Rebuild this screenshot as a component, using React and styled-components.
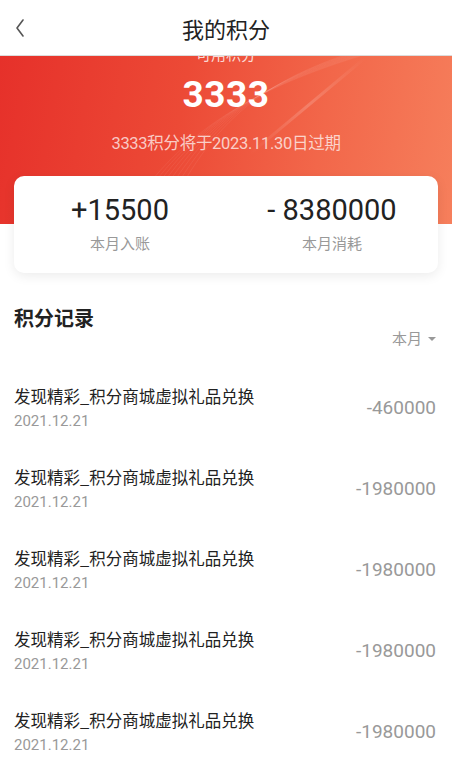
import React from 'react'
import styled, { createGlobalStyle } from 'styled-components'

const GlobalStyle = createGlobalStyle`
  html, body {
    margin: 0;
    padding: 0;
    background: #fff;
  }
  body {
    font-family: Roboto, "Noto Sans CJK SC", sans-serif;
    -webkit-font-smoothing: antialiased;
  }
`

const Page = styled.div`
  width: 452px;
  min-height: 782px;
  background: #fff;
  overflow: hidden;
`

const Header = styled.div`
  position: relative;
  z-index: 2;
  height: 55px;
  background: #fff;
  border-bottom: 1px solid #dcdcdc;
  display: flex;
  align-items: center;
  justify-content: center;
`

const BackButton = styled.div`
  position: absolute;
  left: 10px;
  top: 16px;
  width: 20px;
  height: 24px;
  display: flex;
  align-items: center;
  justify-content: center;
`

const Title = styled.h1`
  margin: 0;
  font-size: 22px;
  font-weight: 400;
  color: #222;
  font-family: "Noto Sans CJK SC", sans-serif;
`

const Hero = styled.div`
  position: relative;
  margin-top: -20px;
  padding: 8px 0 69px;
  background: linear-gradient(100deg, #e6302a 0%, #ec4a36 40%, #f2674a 70%, #f67f5c 100%);
  display: flex;
  flex-direction: column;
  align-items: center;
  overflow: hidden;
`

const HeroDeco = styled.svg`
  position: absolute;
  inset: 0;
  pointer-events: none;
`

const HeroLabel = styled.div`
  position: relative;
  font-size: 15px;
  line-height: 20px;
  color: rgba(255, 255, 255, 0.8);
  font-family: "Noto Sans CJK SC", sans-serif;
`

const Balance = styled.div`
  position: relative;
  margin-top: 9px;
  font-size: 37px;
  line-height: 44px;
  font-weight: 700;
  color: #fff;
  letter-spacing: 0.5px;
`

const Expire = styled.div`
  position: relative;
  margin-top: 16px;
  font-size: 16.5px;
  line-height: 22px;
  color: rgba(255, 255, 255, 0.72);
  letter-spacing: -0.3px;
`

const SummaryCard = styled.div`
  position: relative;
  z-index: 1;
  margin: -48px 14px 0;
  height: 97px;
  box-sizing: border-box;
  padding-top: 16px;
  background: #fff;
  border-radius: 10px;
  box-shadow: 0 3px 12px rgba(0, 0, 0, 0.08);
  display: grid;
  grid-template-columns: 1fr 1fr;
`

const Stat = styled.div`
  display: flex;
  flex-direction: column;
  align-items: center;
`

const StatValue = styled.div`
  font-size: 29px;
  line-height: 36px;
  color: #222;
`

const StatLabel = styled.div`
  margin-top: 5px;
  font-size: 15px;
  line-height: 20px;
  color: #999;
  font-family: "Noto Sans CJK SC", sans-serif;
`

const Section = styled.div`
  padding: 31px 16px 0 14px;
`

const SectionTitle = styled.h2`
  margin: 0;
  font-size: 20px;
  line-height: 28px;
  font-weight: 700;
  color: #222;
  font-family: "Noto Sans CJK SC", sans-serif;
`

const Filter = styled.div`
  margin-top: -4px;
  display: flex;
  justify-content: flex-end;
  align-items: center;
  gap: 6px;
  font-size: 15px;
  line-height: 20px;
  color: #999;
  font-family: "Noto Sans CJK SC", sans-serif;
`

const Caret = styled.span`
  width: 0;
  height: 0;
  margin-top: 2px;
  border-left: 4px solid transparent;
  border-right: 4px solid transparent;
  border-top: 4px solid #999;
`

const List = styled.div`
  margin-top: 18px;
`

const Row = styled.div`
  display: flex;
  align-items: center;
  justify-content: space-between;
  padding: 19px 0 16px;
`

const RowMain = styled.div`
  display: flex;
  flex-direction: column;
  gap: 4px;
`

const RowTitle = styled.div`
  font-size: 16.5px;
  line-height: 22px;
  color: #222;
  font-family: "Noto Sans CJK SC", sans-serif;
`

const RowDate = styled.div`
  font-size: 15px;
  line-height: 20px;
  color: #999;
`

const RowAmount = styled.div`
  font-size: 19px;
  line-height: 24px;
  color: #999;
`

const records = [
  { title: '发现精彩_积分商城虚拟礼品兑换', date: '2021.12.21', amount: '-460000' },
  { title: '发现精彩_积分商城虚拟礼品兑换', date: '2021.12.21', amount: '-1980000' },
  { title: '发现精彩_积分商城虚拟礼品兑换', date: '2021.12.21', amount: '-1980000' },
  { title: '发现精彩_积分商城虚拟礼品兑换', date: '2021.12.21', amount: '-1980000' },
  { title: '发现精彩_积分商城虚拟礼品兑换', date: '2021.12.21', amount: '-1980000' },
]

const App = () => {
  return (
    <Page>
      <GlobalStyle />
      <Header>
        <BackButton>
          <svg width="12" height="20" viewBox="0 0 12 20">
            <path d="M9 2 L3 10 L9 18" fill="none" stroke="#555" strokeWidth="1.6" strokeLinecap="round" strokeLinejoin="round" />
          </svg>
        </BackButton>
        <Title>我的积分</Title>
      </Header>

      <Hero>
        <HeroDeco viewBox="0 0 452 188" preserveAspectRatio="none">
          <defs>
            <linearGradient id="streak" x1="0" y1="1" x2="1" y2="0">
              <stop offset="0" stopColor="#fff" stopOpacity="0" />
              <stop offset="0.5" stopColor="#fff" stopOpacity="0.18" />
              <stop offset="1" stopColor="#fff" stopOpacity="0" />
            </linearGradient>
          </defs>
          {[0, 1, 2, 3, 4, 5, 6, 7].map(i => (
            <path
              key={i}
              d={`M${120 + i * 6} ${188} C ${170 + i * 6} ${110 - i * 4}, ${230 + i * 5} ${60 - i * 3}, ${360 + i * 4} ${20 - i * 2}`}
              fill="none"
              stroke="#fff"
              strokeOpacity="0.06"
              strokeWidth="1"
            />
          ))}
          <path d="M250 118 L365 22" stroke="url(#streak)" strokeWidth="3" />
        </HeroDeco>
        <HeroLabel>可用积分</HeroLabel>
        <Balance>3333</Balance>
        <Expire>3333积分将于2023.11.30日过期</Expire>
      </Hero>

      <SummaryCard>
        <Stat>
          <StatValue>+15500</StatValue>
          <StatLabel>本月入账</StatLabel>
        </Stat>
        <Stat>
          <StatValue>- 8380000</StatValue>
          <StatLabel>本月消耗</StatLabel>
        </Stat>
      </SummaryCard>

      <Section>
        <SectionTitle>积分记录</SectionTitle>
        <Filter>
          本月
          <Caret />
        </Filter>
        <List>
          {records.map((r, i) => (
            <Row key={i}>
              <RowMain>
                <RowTitle>{r.title}</RowTitle>
                <RowDate>{r.date}</RowDate>
              </RowMain>
              <RowAmount>{r.amount}</RowAmount>
            </Row>
          ))}
        </List>
      </Section>
    </Page>
  )
}

export default App
